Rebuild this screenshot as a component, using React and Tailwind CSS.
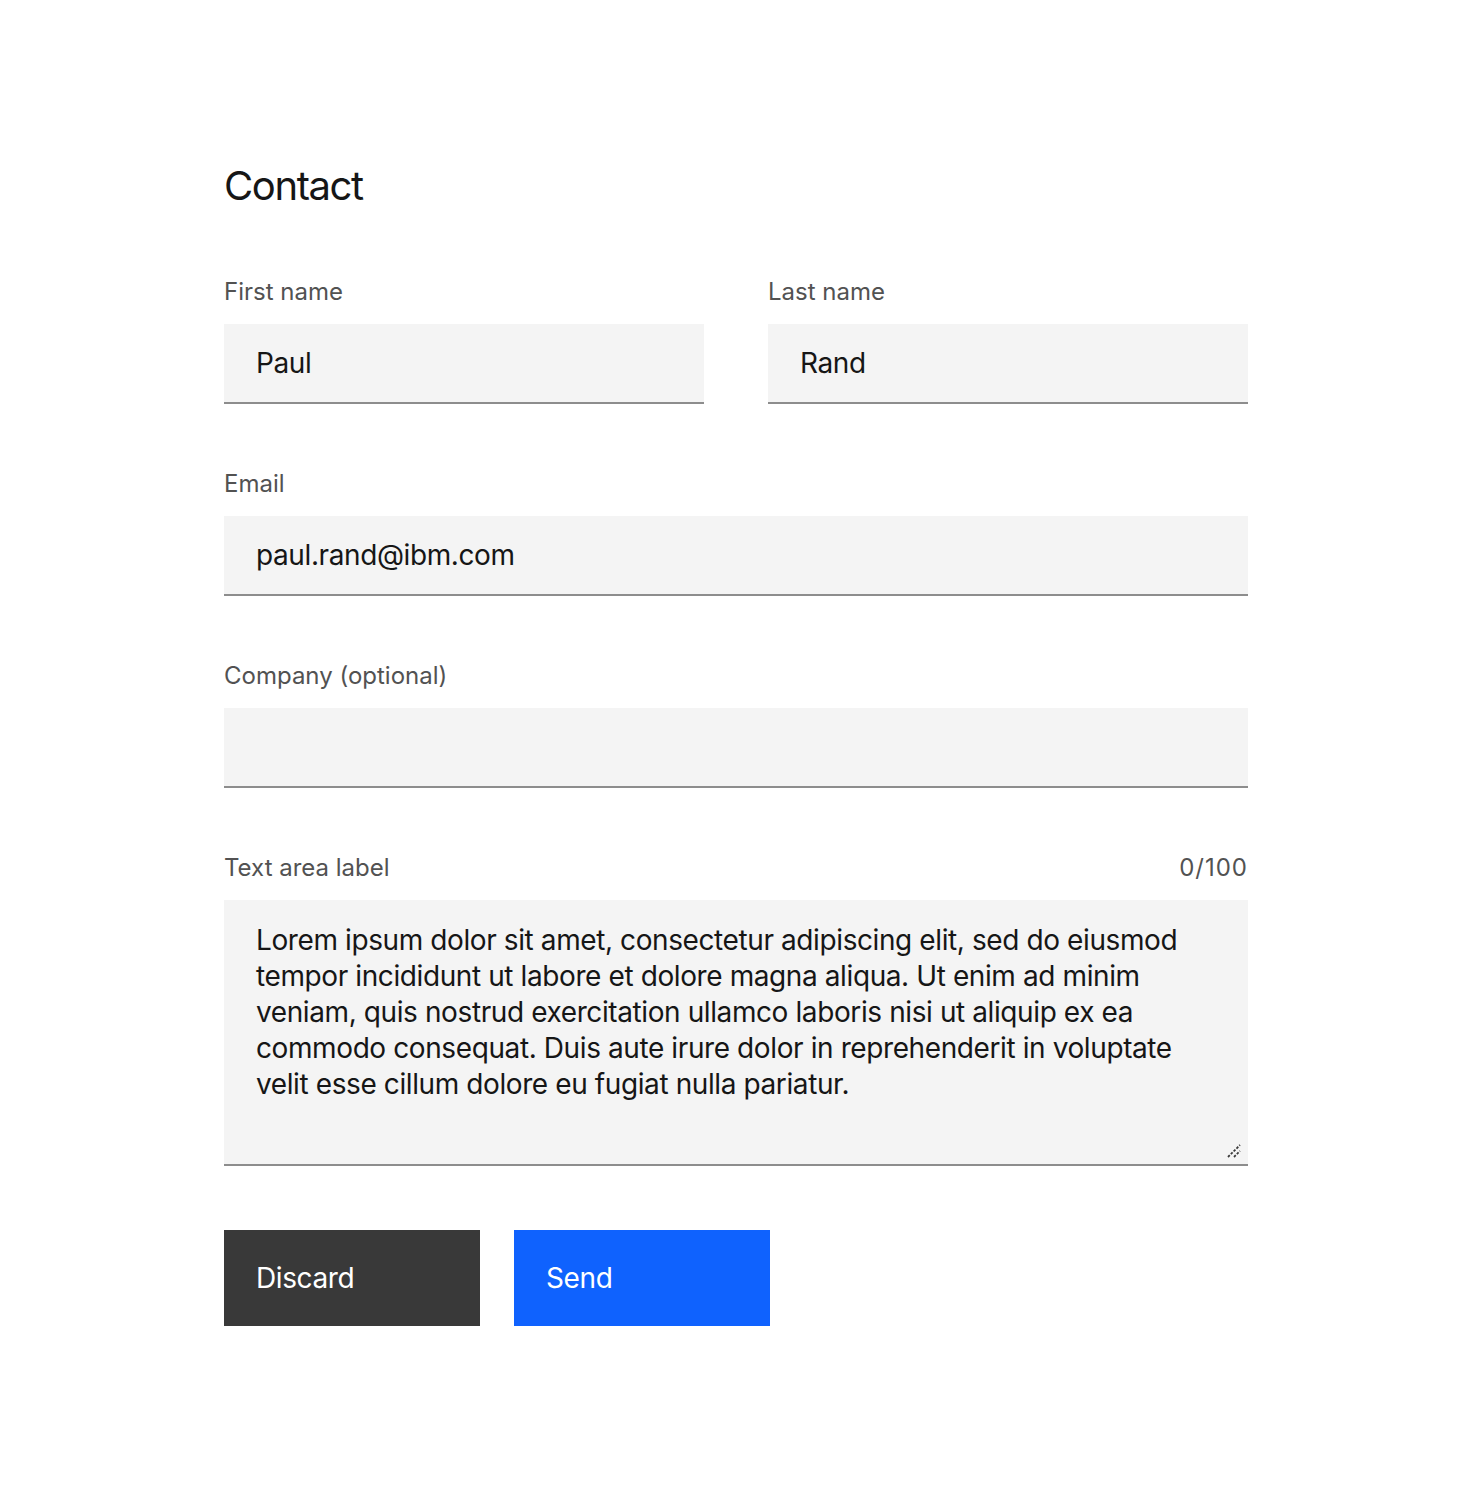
import React, { useState } from "react";

const FONT = { fontFamily: "Inter, 'Noto Sans', sans-serif" };

const Field = ({ label, value, className = "" }) => (
  <div className={className}>
    <label className="block text-[24px] leading-[32px] text-[#525252] mb-4">
      {label}
    </label>
    <input
      defaultValue={value}
      className="block w-full h-[80px] bg-[#f4f4f4] border-b-2 border-[#8d8d8d] px-8 text-[28px] tracking-[-0.4px] text-[#161616] outline-none"
    />
  </div>
);

const LOREM =
  "Lorem ipsum dolor sit amet, consectetur adipiscing elit, sed do eiusmod tempor incididunt ut labore et dolore magna aliqua. Ut enim ad minim veniam, quis nostrud exercitation ullamco laboris nisi ut aliquip ex ea commodo consequat. Duis aute irure dolor in reprehenderit in voluptate velit esse cillum dolore eu fugiat nulla pariatur.";

export default function App() {
  const [text, setText] = useState(LOREM);

  return (
    <div className="min-h-[1486px] bg-white" style={FONT}>
      <div className="w-[1024px] mx-auto pt-[160px]">
        <h1 className="text-[40px] leading-[52px] tracking-[-1.4px] text-[#161616] mb-16">Contact</h1>

        <div className="grid grid-cols-2 gap-16">
          <Field label="First name" value="Paul" />
          <Field label="Last name" value="Rand" />
        </div>

        <Field label="Email" value="paul.rand@ibm.com" className="mt-16" />
        <Field label="Company (optional)" value="" className="mt-16" />

        <div className="mt-16">
          <div className="flex justify-between items-center mb-4">
            <label className="text-[24px] leading-[32px] text-[#525252]">
              Text area label
            </label>
            <span className="text-[24px] leading-[32px] tracking-[1px] text-[#525252]">
              0/100
            </span>
          </div>
          <div className="relative">
            <textarea
              value={text}
              onChange={(e) => setText(e.target.value)}
              className="block w-full h-[266px] bg-[#f4f4f4] border-b-2 border-[#8d8d8d] px-8 py-[22px] text-[28px] leading-[36px] tracking-[-0.4px] text-[#161616] outline-none resize-none"
            />
            {/* resize grip */}
            <svg
              className="absolute right-[7px] bottom-[8px] pointer-events-none"
              width="14"
              height="14"
              viewBox="0 0 14 14"
            >
              <path d="M1 13 L13 1 M7 13 L13 7" stroke="#3a3a3a" strokeWidth="1.8" strokeDasharray="2.5 1.5" />
            </svg>
          </div>
        </div>

        <div className="flex gap-[34px] mt-16">
          <button className="w-[256px] h-[96px] bg-[#393939] text-white text-[28px] tracking-[-0.4px] text-left px-8">
            Discard
          </button>
          <button className="w-[256px] h-[96px] bg-[#0f62fe] text-white text-[28px] tracking-[-0.4px] text-left px-8">
            Send
          </button>
        </div>
      </div>
    </div>
  );
}
